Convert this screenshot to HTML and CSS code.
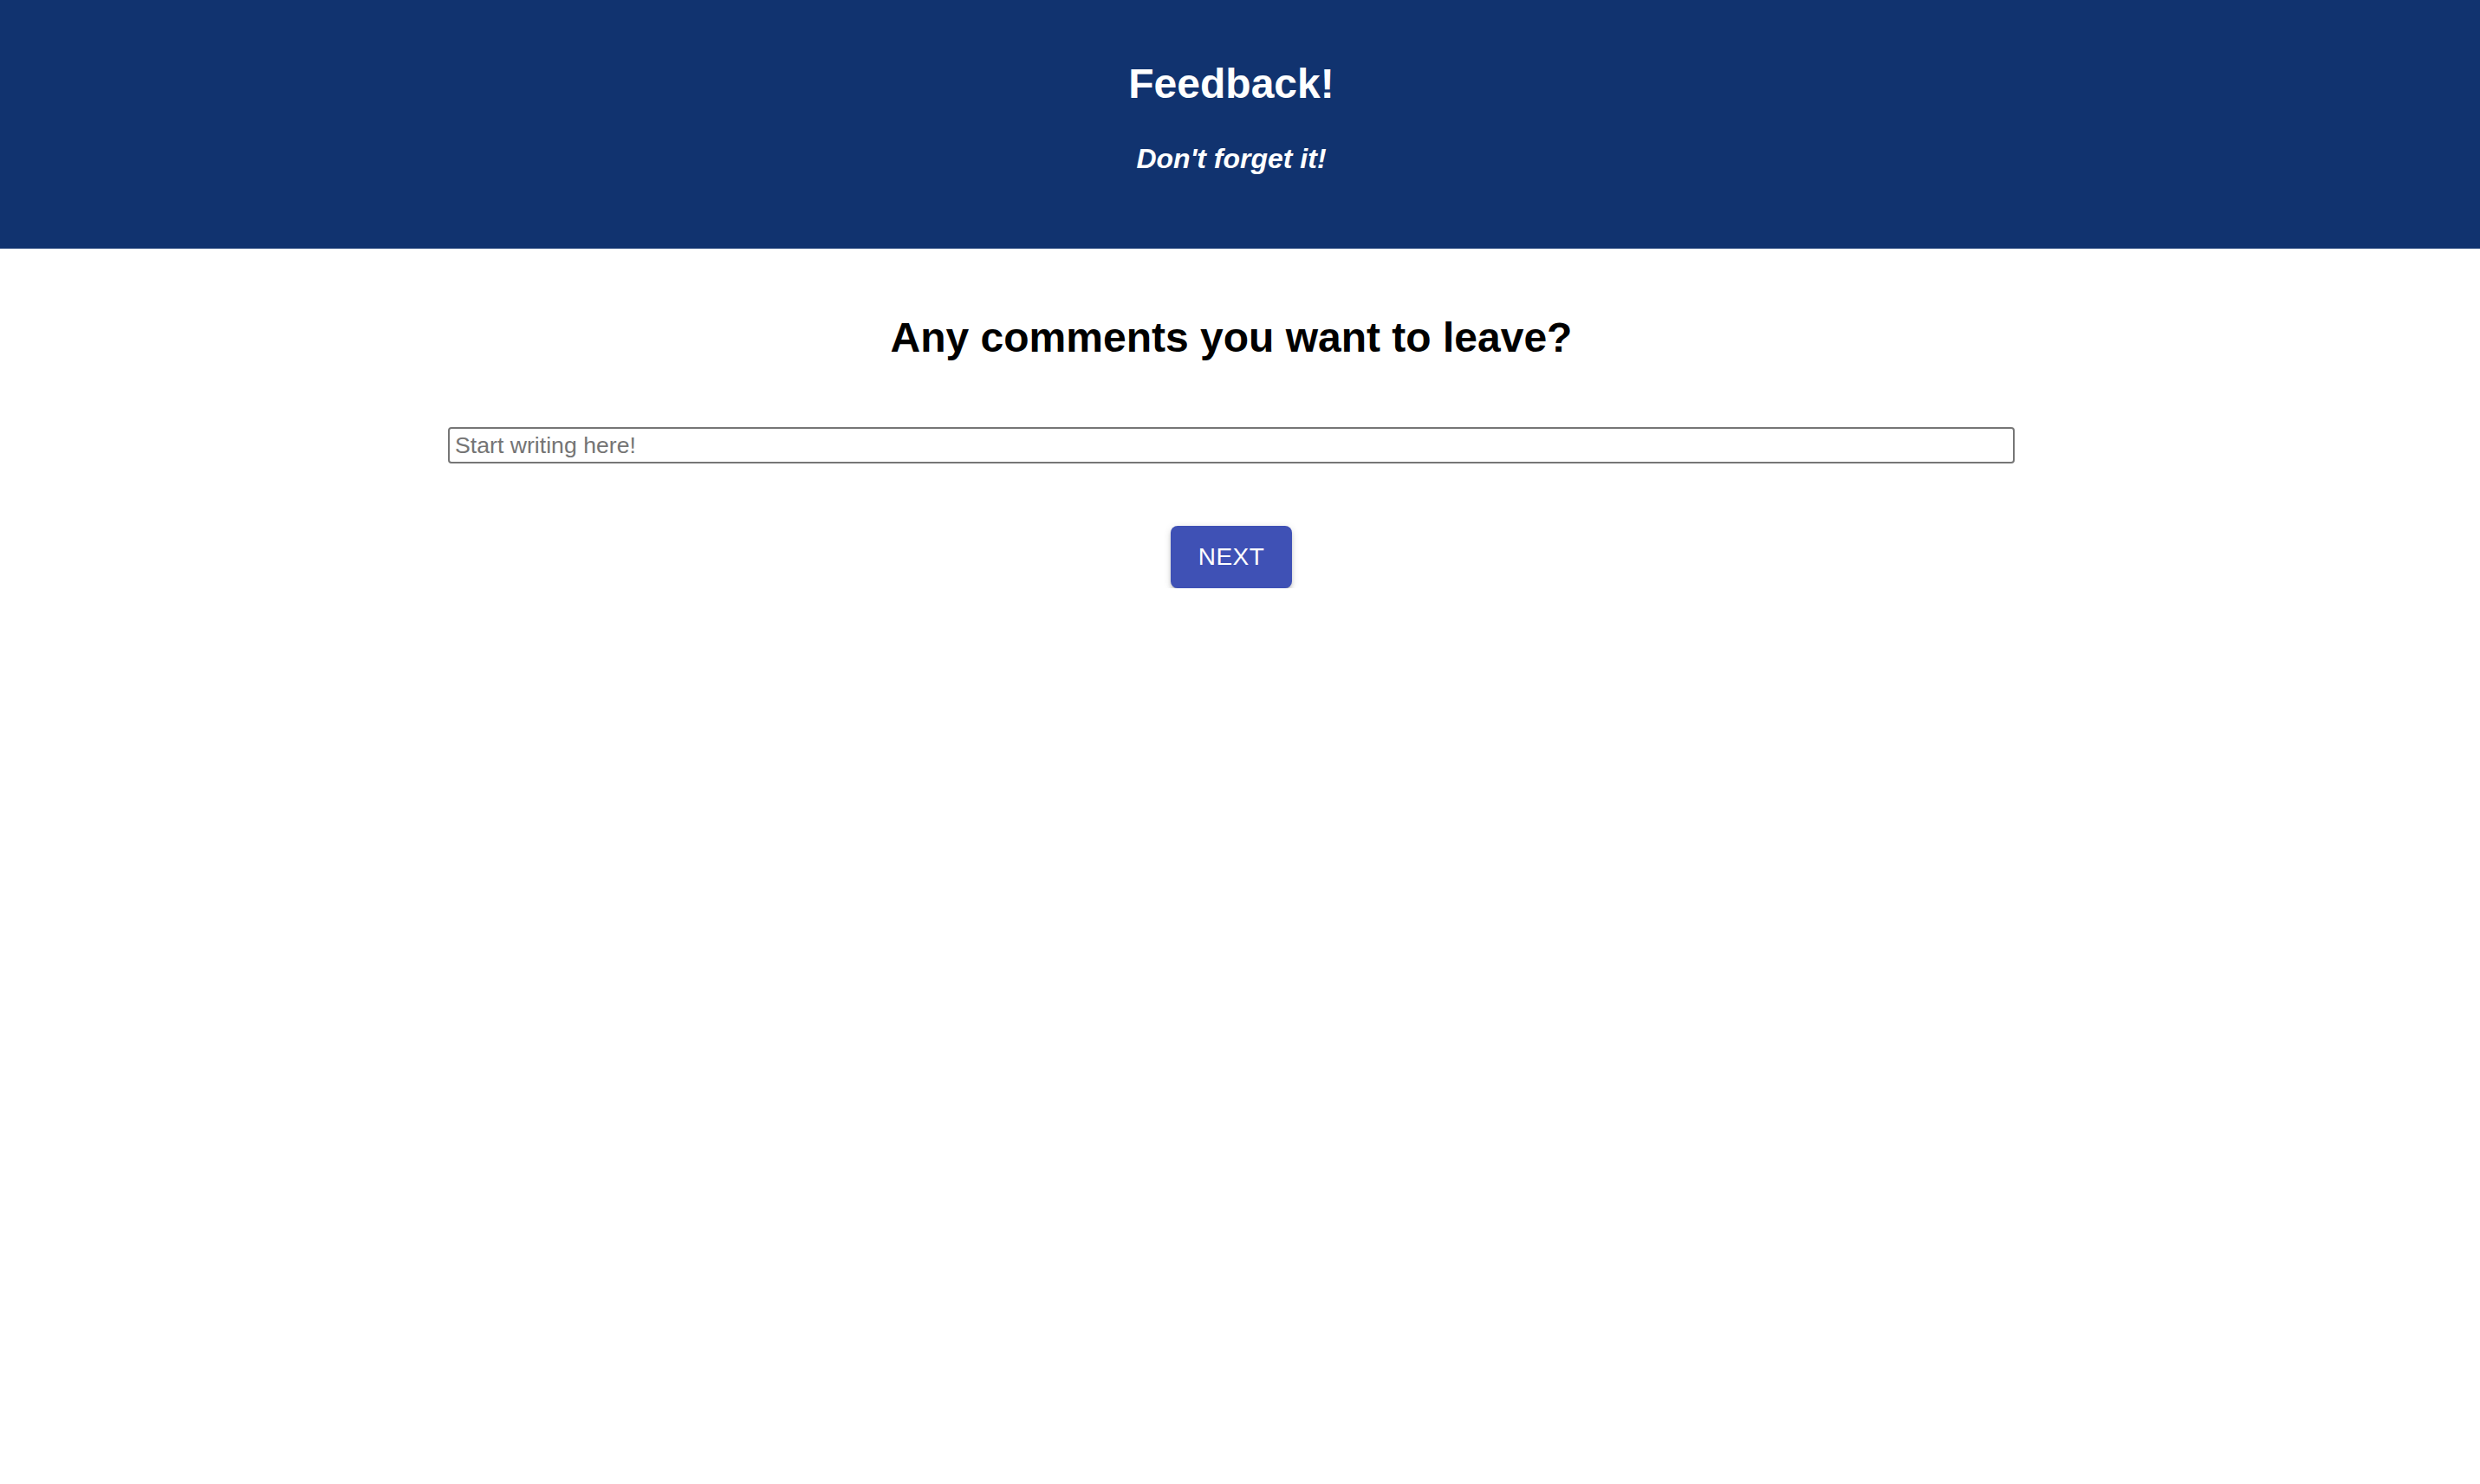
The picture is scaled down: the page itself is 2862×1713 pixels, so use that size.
FILE: index.html
```html
<!DOCTYPE html>
<html lang="en">
<head>
<meta charset="utf-8">
<title>Feedback</title>
<link rel="stylesheet" href="styles.css">
</head>
<body>
  <header class="banner">
    <h1 class="banner-title">Feedback!</h1>
    <p class="banner-sub">Don't forget it!</p>
  </header>
  <main class="content">
    <h2 class="question">Any comments you want to leave?</h2>
    <input class="comment" type="text" placeholder="Start writing here!">
    <button class="next-btn" type="button">NEXT</button>
  </main>
</body>
</html>
```

FILE: styles.css
```css
html, body {
  margin: 0;
  padding: 0;
  background: #ffffff;
}

body {
  font-family: "Liberation Sans", Arial, Helvetica, sans-serif;
}

.banner {
  background: #11336f;
  color: #ffffff;
  padding: 69px 20px 85px 0;
  display: flex;
  flex-direction: column;
  align-items: center;
}

.banner-title {
  margin: 0;
  font-size: 48px;
  line-height: 56px;
  font-weight: 700;
}

.banner-sub {
  margin: 40px 0 0 0;
  font-size: 32px;
  line-height: 37px;
  font-weight: 700;
  font-style: italic;
}

.content {
  padding: 75px 20px 0 0;
  display: flex;
  flex-direction: column;
  align-items: center;
}

.question {
  margin: 0;
  font-size: 48px;
  line-height: 56px;
  font-weight: 700;
  color: #000000;
}

.comment {
  box-sizing: border-box;
  margin-top: 75px;
  width: 1808px;
  height: 42px;
  border: 2px solid #767676;
  border-radius: 4px;
  padding: 2px 6px;
  font-family: "Liberation Sans", Arial, Helvetica, sans-serif;
  font-size: 26.67px;
  color: #000000;
  background: #ffffff;
}

.comment::placeholder {
  color: #757575;
}

.next-btn {
  margin-top: 72px;
  width: 140px;
  height: 72px;
  border: none;
  border-radius: 8px;
  background: #3f51b5;
  color: #ffffff;
  font-family: "Liberation Sans", Arial, Helvetica, sans-serif;
  font-size: 28px;
  font-weight: 400;
  letter-spacing: 0.5px;
  cursor: pointer;
  box-shadow: 0 6px 2px -4px rgba(0,0,0,0.2), 0 4px 4px 0 rgba(0,0,0,0.14), 0 2px 10px 0 rgba(0,0,0,0.12);
}
```
